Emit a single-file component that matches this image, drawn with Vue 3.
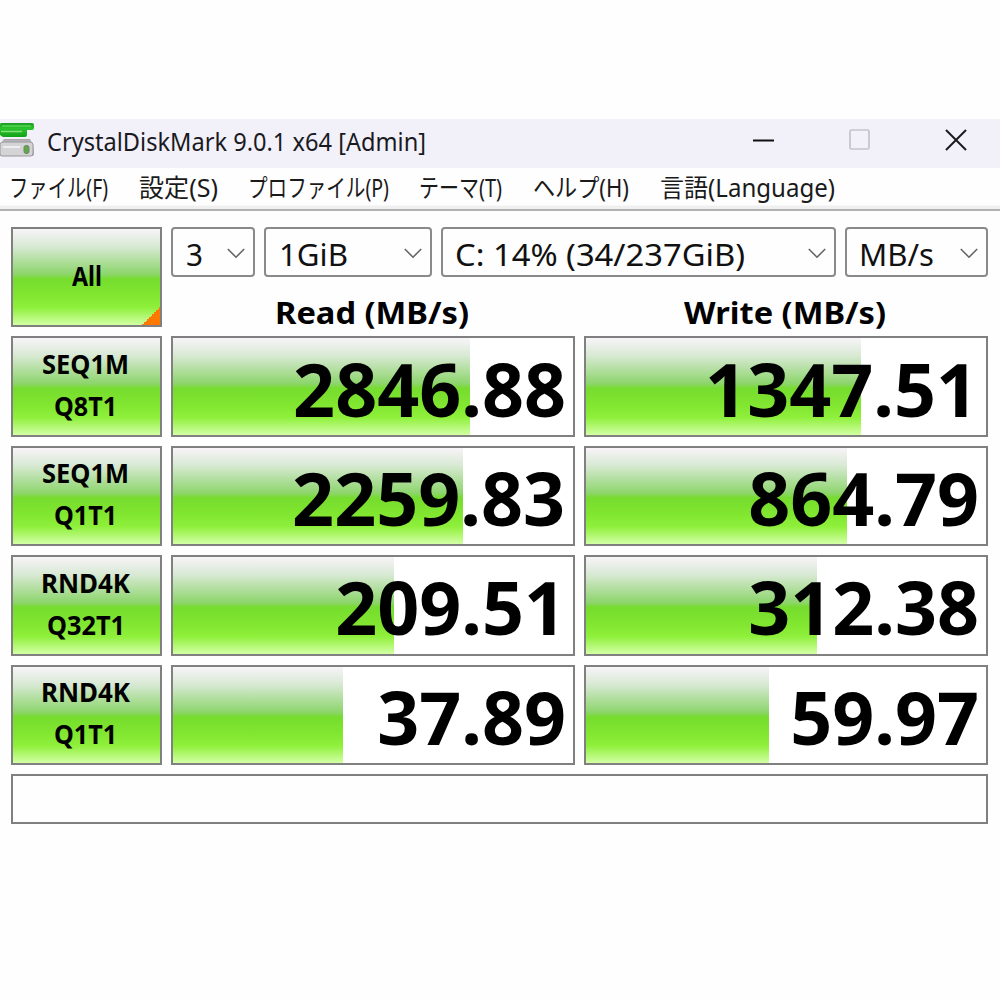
<template>
  <div class="window">
    <header class="titlebar">
      <svg class="app-icon" width="35" height="40" viewBox="0 0 35 40">
        <defs>
          <linearGradient id="green" x1="0" y1="0" x2="0" y2="1">
            <stop offset="0" stop-color="#1f9a24" />
            <stop offset="0.4" stop-color="#2cc42e" />
            <stop offset="1" stop-color="#12a018" />
          </linearGradient>
          <linearGradient id="metal" x1="0" y1="0" x2="0" y2="1">
            <stop offset="0" stop-color="#a4a4a8" />
            <stop offset="0.35" stop-color="#dededf" />
            <stop offset="1" stop-color="#a0a0a4" />
          </linearGradient>
        </defs>
        <path d="M0 5Q0 4 2 4H32Q34 4 34 6V9Q34 11 32 11H27V16Q27 18 25 18H3L0 16Z" fill="url(#green)" />
        <path d="M2 7H31" stroke="#52d950" stroke-width="1.5" />
        <path d="M1 12.5H22" stroke="#7fe377" stroke-width="1.5" />
        <path d="M4 20H30L34 27V35Q34 37 32 37H2Q0 37 0 35V25Z" fill="url(#metal)" />
        <path d="M0 25Q1 23 3 23H30Q33 23 33 26V34Q33 37 31 37H2Q0 37 0 35Z" fill="#d4d4d6" stroke="#97979b" />
        <path d="M3 28H20" stroke="#eeeeef" stroke-width="2" />
        <rect x="24" y="26.5" width="5" height="8" rx="2" fill="#5fa84a" stroke="#71866b" />
      </svg>
      <span v-fit="379" class="title">CrystalDiskMark 9.0.1 x64 [Admin]</span>
      <div class="controls">
        <svg width="22" height="22" viewBox="0 0 22 22"><path d="M0 11.5H21" stroke="#111" stroke-width="2" /></svg>
        <svg width="22" height="22" viewBox="0 0 22 22">
          <rect x="1" y="1" width="19" height="19" rx="1.5" fill="none" stroke="#c5c2cb" stroke-width="1.7" />
        </svg>
        <svg width="22" height="22" viewBox="0 0 22 22">
          <path d="M1 1L21 21M21 1L1 21" stroke="#1b1b1f" stroke-width="2" />
        </svg>
      </div>
    </header>

    <nav class="menu">
      <span v-for="item in menu" :key="item.label" class="menu-item" :style="{ width: item.slot + 'px' }">
        <span v-fit="item.width">{{ item.label }}</span>
      </span>
    </nav>

    <main class="content">
      <button class="tile all">
        <span v-fit="30">All</span>
      </button>
      <div class="top">
        <div class="selects">
          <div v-for="s in selects" :key="s.text" class="select" :style="{ width: s.box + 'px', paddingLeft: s.pad + 'px' }">
            <span v-fit="s.width">{{ s.text }}</span>
            <svg width="18" height="11" viewBox="0 0 18 11">
              <path d="M0.8 1L9 9.2L17.2 1" fill="none" stroke="#666" stroke-width="1.6" />
            </svg>
          </div>
        </div>
        <div class="heads">
          <div class="head"><span v-fit="194">Read (MB/s)</span></div>
          <div class="head"><span v-fit="202">Write (MB/s)</span></div>
        </div>
      </div>

      <template v-for="row in rows" :key="row.test + row.queue">
        <button class="tile">
          <span v-fit="row.testWidth">{{ row.test }}</span>
          <span v-fit="row.queueWidth">{{ row.queue }}</span>
        </button>
        <div v-for="cell in row.cells" :key="cell.value" class="meter">
          <div class="bar" :style="{ width: cell.bar + '%' }"></div>
          <span class="value" :style="{ marginRight: cell.inset + 'px' }">{{ cell.value }}</span>
        </div>
      </template>

      <div class="status"></div>
    </main>
  </div>
</template>

<script setup>
// Squeeze or stretch a text horizontally to a width in pixels
const vFit = {
  mounted(el, { value }) {
    const natural = el.getBoundingClientRect().width;
    el.style.transform = `scaleX(${value / natural})`;
    el.style.marginRight = `${value - natural}px`;
  },
};

const menu = [
  { label: "ファイル(F)", width: 99, slot: 130 },
  { label: "設定(S)", width: 79, slot: 109 },
  { label: "プロファイル(P)", width: 141, slot: 171 },
  { label: "テーマ(T)", width: 83, slot: 114 },
  { label: "ヘルプ(H)", width: 96, slot: 127 },
  { label: "言語(Language)", width: 175, slot: 180 },
];

const selects = [
  { text: "3", width: 17, box: 84, pad: 13 },
  { text: "1GiB", width: 69, box: 168, pad: 13 },
  { text: "C: 14% (34/237GiB)", width: 290, box: 395, pad: 12 },
  { text: "MB/s", width: 75, box: 143, pad: 12 },
];

const rows = [
  {
    test: "SEQ1M", testWidth: 87, queue: "Q8T1", queueWidth: 63,
    cells: [{ value: "2846.88", bar: 74.2, inset: 7 }, { value: "1347.51", bar: 68.8, inset: 8 }],
  },
  {
    test: "SEQ1M", testWidth: 87, queue: "Q1T1", queueWidth: 63,
    cells: [{ value: "2259.83", bar: 72.5, inset: 8 }, { value: "864.79", bar: 65.3, inset: 7 }],
  },
  {
    test: "RND4K", testWidth: 89, queue: "Q32T1", queueWidth: 78,
    cells: [{ value: "209.51", bar: 55.3, inset: 7 }, { value: "312.38", bar: 57.8, inset: 7 }],
  },
  {
    test: "RND4K", testWidth: 89, queue: "Q1T1", queueWidth: 63,
    cells: [{ value: "37.89", bar: 42.5, inset: 7 }, { value: "59.97", bar: 45.8, inset: 7 }],
  },
];
</script>

<style>
body {
  background: #fff;
}
</style>

<style scoped>
.window {
  width: 1000px;
  height: 1000px;
  padding-top: 119px;
  box-sizing: border-box;
  overflow: hidden;
  background: #fefefe;
  color: #000;
  font-family: "Noto Sans", "Noto Sans CJK JP", sans-serif;
}

.window span {
  white-space: nowrap;
  transform-origin: 0 50%;
}

.titlebar {
  display: flex;
  align-items: center;
  height: 49px;
  background: #f2f1fa;
}

.app-icon {
  align-self: flex-start;
  margin-right: 12px;
}

.title {
  font-size: 24.5px;
  line-height: 46px;
  padding-bottom: 3px;
  color: #1a1a1e;
}

.controls {
  display: flex;
  gap: 74px;
  margin: 0 33px 7px auto;
}

.controls svg {
  display: block;
}

.menu {
  display: flex;
  align-items: center;
  height: 43px;
  padding: 0 0 2px 9px;
  box-sizing: border-box;
  border-bottom: 2px solid #b2b2b2;
  background: linear-gradient(#fefefe 37px, #f0f0f0 38px);
  font-size: 24.5px;
  line-height: 36px;
  color: #1a1a1a;
}

.menu-item {
  display: flex;
  flex: none;
}

.content {
  display: grid;
  grid-template-columns: 151px 404px 404px;
  grid-template-rows: 100.4px repeat(4, 100.4px) 50px;
  gap: 9px;
  padding: 16px 0 0 11px;
}

.tile,
.meter,
.status {
  box-sizing: border-box;
  border: 2px solid #808080;
}

.tile,
.bar {
  background: linear-gradient(#f8f4f8 0%, #d8e9d4 18%, #8dd56c 47%, #76dc2e 52%, #82e730 70%, #8ff03c 82%, #d3ffa5 100%);
}

.tile {
  display: flex;
  flex-direction: column;
  align-items: center;
  justify-content: center;
  padding: 0 2px 3px 0;
  border-radius: 0;
  font: bold 26px/42px "Noto Sans", sans-serif;
  color: #000;
}

.all {
  padding: 0 0 2px;
  background:
    linear-gradient(135deg, transparent 50%, #ff7800 50%) right bottom / 18px 18px no-repeat,
    linear-gradient(#f8f4f8 0%, #d8e9d4 18%, #8dd56c 47%, #76dc2e 52%, #82e730 70%, #8ff03c 82%, #d3ffa5 100%);
}

.top {
  grid-column: 2 / 4;
}

.selects {
  display: flex;
  gap: 9px;
}

.select {
  display: flex;
  align-items: center;
  height: 50px;
  padding-right: 8px;
  box-sizing: border-box;
  border: 2px solid #8a8a8a;
  border-radius: 4px;
  font-size: 31.5px;
  line-height: 50px;
  color: #111;
}

.select span {
  margin-top: 4px;
}

.select svg {
  flex: none;
  margin: 3px 0 0 auto;
}

.heads {
  display: grid;
  grid-template-columns: 404px 404px;
  gap: 9px;
}

.head {
  display: flex;
  justify-content: center;
  padding-right: 3px;
  font-size: 31px;
  font-weight: bold;
  line-height: 70px;
}

.meter {
  display: grid;
  align-items: center;
  background: #fff;
}

.bar,
.value {
  grid-area: 1 / 1;
}

.bar {
  height: 100%;
}

.value {
  justify-self: end;
  padding-top: 3px;
  font-size: 73.5px;
  font-weight: bold;
  line-height: 93px;
}

.status {
  grid-column: 1 / 4;
}
</style>
